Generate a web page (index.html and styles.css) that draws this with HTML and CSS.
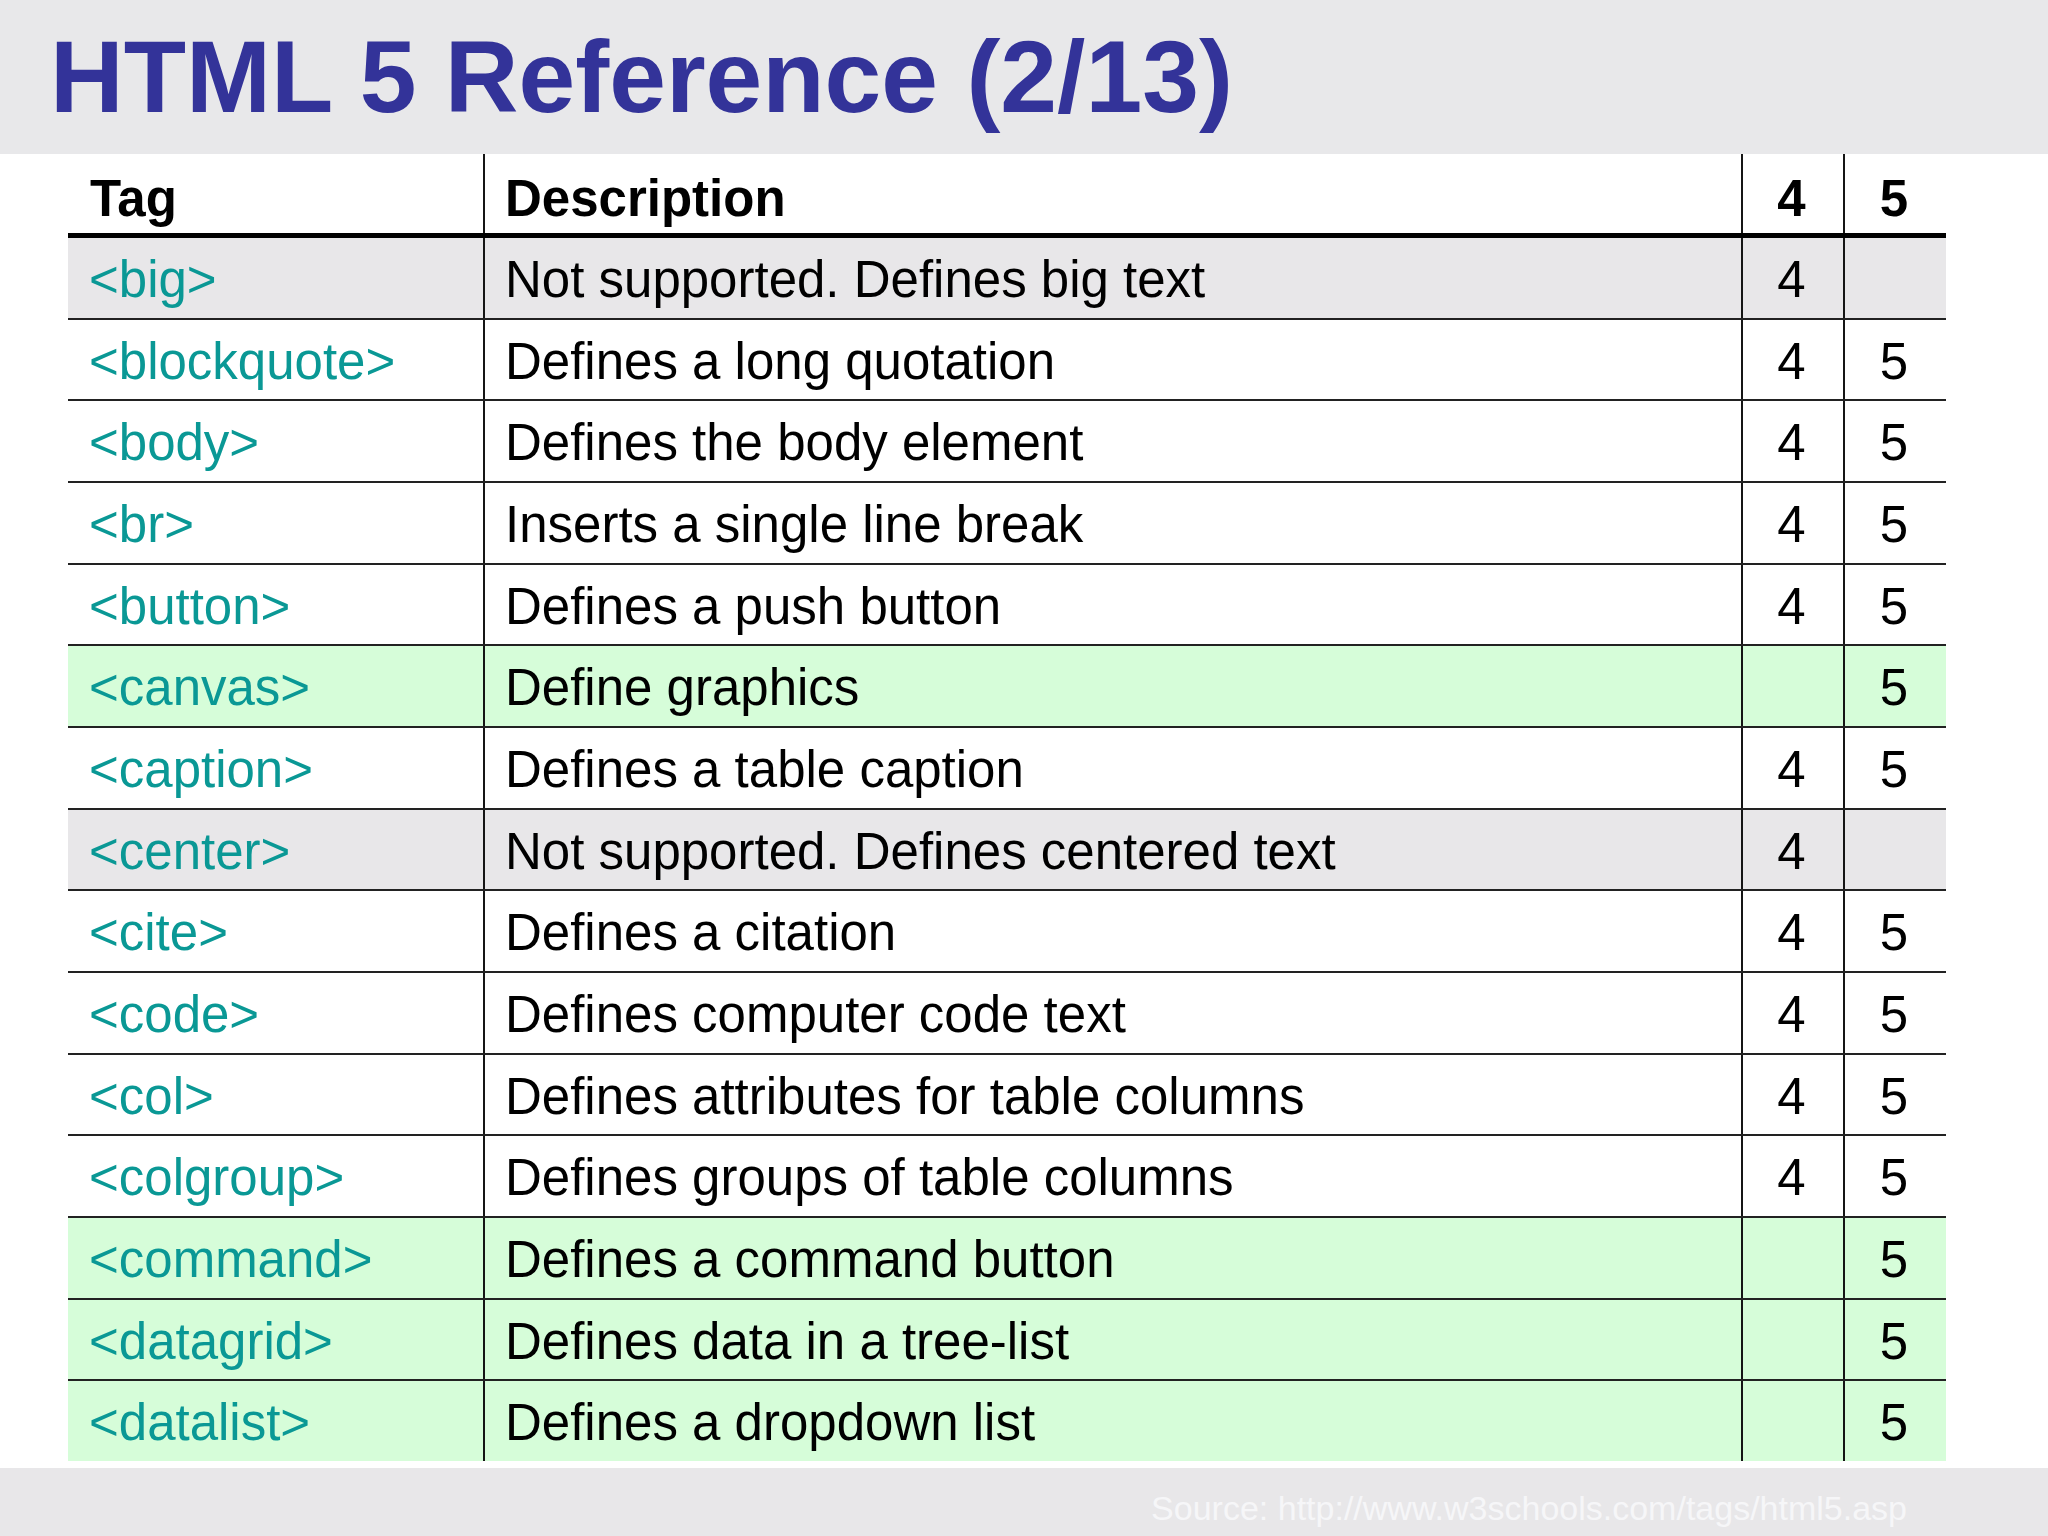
FILE: index.html
```html
<!DOCTYPE html>
<html lang="en">
<head>
<meta charset="utf-8">
<title>HTML 5 Reference (2/13)</title>
<link rel="stylesheet" href="styles.css">
</head>
<body>
<header class="title-bar">
  <h1 class="title">HTML 5 Reference (2/13)</h1>
</header>
<main class="content">
  <div class="ref-table">
    <div class="row head">
      <div class="cell tag">Tag</div>
      <div class="cell desc">Description</div>
      <div class="cell num">4</div>
      <div class="cell num">5</div>
    </div>
    <div class="row old">
      <div class="cell tag">&lt;big&gt;</div>
      <div class="cell desc">Not supported. Defines big text</div>
      <div class="cell num">4</div>
      <div class="cell num"></div>
    </div>
    <div class="row">
      <div class="cell tag">&lt;blockquote&gt;</div>
      <div class="cell desc">Defines a long quotation</div>
      <div class="cell num">4</div>
      <div class="cell num">5</div>
    </div>
    <div class="row">
      <div class="cell tag">&lt;body&gt;</div>
      <div class="cell desc">Defines the body element</div>
      <div class="cell num">4</div>
      <div class="cell num">5</div>
    </div>
    <div class="row">
      <div class="cell tag">&lt;br&gt;</div>
      <div class="cell desc">Inserts a single line break</div>
      <div class="cell num">4</div>
      <div class="cell num">5</div>
    </div>
    <div class="row">
      <div class="cell tag">&lt;button&gt;</div>
      <div class="cell desc">Defines a push button</div>
      <div class="cell num">4</div>
      <div class="cell num">5</div>
    </div>
    <div class="row new">
      <div class="cell tag">&lt;canvas&gt;</div>
      <div class="cell desc">Define graphics</div>
      <div class="cell num"></div>
      <div class="cell num">5</div>
    </div>
    <div class="row">
      <div class="cell tag">&lt;caption&gt;</div>
      <div class="cell desc">Defines a table caption</div>
      <div class="cell num">4</div>
      <div class="cell num">5</div>
    </div>
    <div class="row old">
      <div class="cell tag">&lt;center&gt;</div>
      <div class="cell desc">Not supported. Defines centered text</div>
      <div class="cell num">4</div>
      <div class="cell num"></div>
    </div>
    <div class="row">
      <div class="cell tag">&lt;cite&gt;</div>
      <div class="cell desc">Defines a citation</div>
      <div class="cell num">4</div>
      <div class="cell num">5</div>
    </div>
    <div class="row">
      <div class="cell tag">&lt;code&gt;</div>
      <div class="cell desc">Defines computer code text</div>
      <div class="cell num">4</div>
      <div class="cell num">5</div>
    </div>
    <div class="row">
      <div class="cell tag">&lt;col&gt;</div>
      <div class="cell desc">Defines attributes for table columns</div>
      <div class="cell num">4</div>
      <div class="cell num">5</div>
    </div>
    <div class="row">
      <div class="cell tag">&lt;colgroup&gt;</div>
      <div class="cell desc">Defines groups of table columns</div>
      <div class="cell num">4</div>
      <div class="cell num">5</div>
    </div>
    <div class="row new">
      <div class="cell tag">&lt;command&gt;</div>
      <div class="cell desc">Defines a command button</div>
      <div class="cell num"></div>
      <div class="cell num">5</div>
    </div>
    <div class="row new">
      <div class="cell tag">&lt;datagrid&gt;</div>
      <div class="cell desc">Defines data in a tree-list</div>
      <div class="cell num"></div>
      <div class="cell num">5</div>
    </div>
    <div class="row new last">
      <div class="cell tag">&lt;datalist&gt;</div>
      <div class="cell desc">Defines a dropdown list</div>
      <div class="cell num"></div>
      <div class="cell num">5</div>
    </div>
  </div>
</main>
<footer class="source">Source: http://www.w3schools.com/tags/html5.asp</footer>
</body>
</html>
```

FILE: styles.css
```css
html, body {
  margin: 0;
  padding: 0;
}

body {
  background: #ffffff;
  font-family: "Liberation Sans", Arial, sans-serif;
  color: #000000;
  display: flex;
  flex-direction: column;
  min-height: 100vh;
}

.title-bar {
  background: #e8e8ea;
  height: 154px;
  box-sizing: border-box;
  padding: 26px 0 0 50px;
}

.title {
  margin: 0;
  font-size: 102px;
  line-height: 102px;
  font-weight: bold;
  color: #333399;
  white-space: nowrap;
}

.content {
  flex: 1;
  padding-left: 68px;
}

.ref-table {
  width: 1878px;
}

.row {
  display: grid;
  grid-template-columns: 415px 1258px 102px 103px;
  height: 81.67px;
  box-sizing: border-box;
  border-bottom: 2px solid #222222;
  background: #ffffff;
}

.row.head {
  height: 84px;
  border-bottom: 5px solid #000000;
}

.row.last {
  height: 79.67px;
  border-bottom: none;
}

.row.old {
  background: #e8e7e9;
}

.row.new {
  background: #d6fdd9;
}

.cell {
  font-size: 51px;
  line-height: 77px;
  padding-top: 3px;
  white-space: nowrap;
  overflow: hidden;
}

.head .cell {
  font-weight: bold;
  line-height: 70px;
  padding-top: 10px;
}

.cell + .cell {
  border-left: 2px solid #151515;
}

.tag {
  padding-left: 21px;
  color: #0a9895;
}

.head .tag {
  color: #000000;
  padding-left: 22px;
}

.desc {
  padding-left: 20px;
}

.num {
  text-align: center;
  padding-right: 3px;
}

.source {
  height: 68px;
  box-sizing: border-box;
  margin-top: 6px;
  background: #e8e7e9;
  color: #f6f6f8;
  font-size: 34px;
  line-height: 38px;
  padding: 21px 141px 0 0;
  text-align: right;
  white-space: nowrap;
}
```
